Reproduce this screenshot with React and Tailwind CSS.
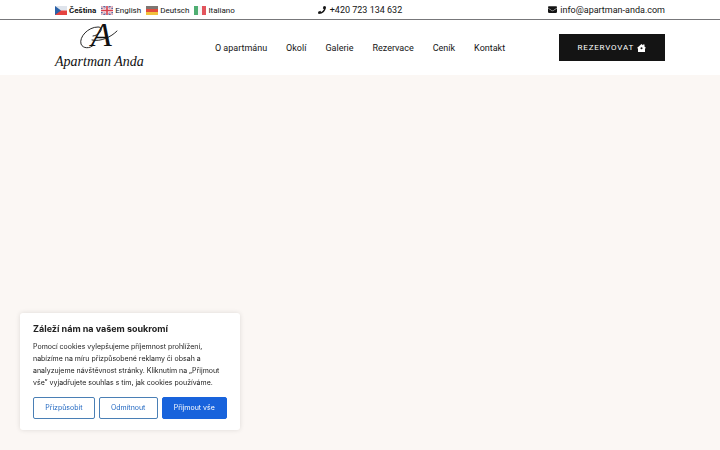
import React from 'react';
import { FaEnvelope, FaPhone } from 'react-icons/fa';

const NAV_LINKS = ['O apartmánu', 'Okolí', 'Galerie', 'Rezervace', 'Ceník', 'Kontakt'];

function FlagCz() {
  return (
    <svg viewBox="0 0 12 9" className="w-3 h-[9px]" aria-hidden="true">
      <rect width="12" height="4.5" fill="#dfe4ec" />
      <rect y="4.5" width="12" height="4.5" fill="#e5433f" />
      <path d="M0 0L6 4.5L0 9Z" fill="#2b62a8" />
    </svg>
  );
}

function FlagGb() {
  return (
    <svg viewBox="0 0 12 9" className="w-3 h-[9px]" aria-hidden="true">
      <rect width="12" height="9" fill="#5c6a9f" />
      <path d="M0 0L12 9M12 0L0 9" stroke="#f3e9ee" strokeWidth="1.8" />
      <path d="M0 0L12 9M12 0L0 9" stroke="#dc6470" strokeWidth="0.6" />
      <path d="M6 0V9M0 4.5H12" stroke="#f7eef1" strokeWidth="3" />
      <path d="M6 0V9M0 4.5H12" stroke="#d8414f" strokeWidth="1.6" />
    </svg>
  );
}

function FlagDe() {
  return (
    <svg viewBox="0 0 12 9" className="w-3 h-[9px]" aria-hidden="true">
      <rect width="12" height="3" fill="#7d7672" />
      <rect y="3" width="12" height="3" fill="#e34a3c" />
      <rect y="6" width="12" height="3" fill="#f2c13c" />
    </svg>
  );
}

function FlagIt() {
  return (
    <svg viewBox="0 0 12 9" className="w-3 h-[9px]" aria-hidden="true">
      <rect width="4" height="9" fill="#4fae72" />
      <rect x="4" width="4" height="9" fill="#f6f6f6" />
      <rect x="8" width="4" height="9" fill="#e2545c" />
    </svg>
  );
}

const LANGUAGES = [
  { name: 'Čeština', Flag: FlagCz, active: true },
  { name: 'English', Flag: FlagGb },
  { name: 'Deutsch', Flag: FlagDe },
  { name: 'Italiano', Flag: FlagIt },
];

function Logo() {
  return (
    <a href="#" className="block w-[88px]">
      <svg viewBox="0 0 88 54" className="w-full overflow-visible" role="img" aria-label="Apartman Anda">
        {/* Monogram with its flourish */}
        <text x="36" y="25" fontFamily="'Liberation Serif', serif" fontStyle="italic" fontSize="34" fill="#111">
          A
        </text>
        <path
          d="M38 24.5C35 27.5 28 28 26 23C24 16 33 6 43 6C49 6 46 14 38 15M37 19C46 21 56 16 62 10"
          fill="none"
          stroke="#111"
          strokeWidth="0.9"
          strokeLinecap="round"
        />
        <text x="0" y="45" fontFamily="'Liberation Serif', serif" fontStyle="italic" fontSize="14" fill="#111">
          Apartman Anda
        </text>
      </svg>
    </a>
  );
}

function HouseIcon() {
  return (
    <svg viewBox="0 0 18 16" className="w-[9px] h-2" fill="currentColor" aria-hidden="true">
      <path
        fillRule="evenodd"
        d="M9 0L12 2.5V1H15V5L18 8L16 9V16H2V9L0 8ZM9 6.5A2 2 0 1 0 9 10.5A2 2 0 1 0 9 6.5Z"
      />
    </svg>
  );
}

function TopBar() {
  return (
    <div className="border-b border-[#77777a] px-[55px]">
      <div className="grid grid-cols-[1fr_auto_1fr] items-center h-[19px]">
        <ul className="flex items-center gap-[5px] pt-0.5 text-[8px] leading-3 whitespace-nowrap">
          {LANGUAGES.map(({ name, Flag, active }) => (
            <li key={name}>
              <a href="#" className={active ? 'flex items-center gap-0.5 font-bold' : 'flex items-center gap-0.5'}>
                <Flag />
                {name}
              </a>
            </li>
          ))}
        </ul>
        <a href="tel:+420723134632" className="flex items-center gap-1 text-[9px] leading-3">
          <FaPhone className="w-2 h-2" />
          +420 723 134 632
        </a>
        <a href="mailto:info@apartman-anda.com" className="flex items-center justify-end gap-[3px] text-[9px] leading-3">
          <FaEnvelope className="w-[9px] h-[9px]" />
          info@apartman-anda.com
        </a>
      </div>
    </div>
  );
}

function Header() {
  return (
    <header className="bg-white">
      <TopBar />
      <div className="grid grid-cols-[1fr_auto_1fr] items-center h-[55px] px-[55px]">
        <Logo />
        <nav className="flex gap-[19px] text-[9px] leading-3 whitespace-nowrap">
          {NAV_LINKS.map((label) => (
            <a key={label} href="#">
              {label}
            </a>
          ))}
        </nav>
        <button
          type="button"
          className="justify-self-end flex items-center gap-[3px] h-[27px] px-[19px] bg-[#141414] text-white text-[8px] leading-3 tracking-widest"
        >
          REZERVOVAT
          <HouseIcon />
        </button>
      </div>
    </header>
  );
}

function CookieBanner() {
  return (
    <section
      aria-labelledby="cookie-title"
      className="fixed bottom-5 left-5 w-[220px] px-[13px] pt-3 pb-[11px] bg-white rounded-[3px] shadow-[0_0_5px_rgba(0,0,0,0.12)] font-['Inter',sans-serif]"
    >
      <h2 id="cookie-title" className="text-[9px] leading-[8px] font-bold text-[#212121]">
        Záleží nám na vašem soukromí
      </h2>
      <p className="mt-2 text-[7px] leading-3 text-[#212121]">
        Pomocí cookies vylepšujeme příjemnost prohlížení, nabízíme na míru přizpůsobené reklamy či obsah a analyzujeme
        návštěvnost stránky. Kliknutím na „Přijmout vše” vyjadřujete souhlas s tím, jak cookies používáme.
      </p>
      <div className="mt-2 flex gap-1 text-[7px] leading-3">
        <button type="button" className="flex-auto h-[22px] border border-[#4a7fb5] rounded-xs text-[#1f66c0]">
          Přizpůsobit
        </button>
        <button type="button" className="flex-auto h-[22px] border border-[#4a7fb5] rounded-xs text-[#1f66c0]">
          Odmítnout
        </button>
        <button type="button" className="flex-auto h-[22px] border border-[#1863dc] rounded-xs bg-[#1863dc] text-white">
          Přijmout vše
        </button>
      </div>
    </section>
  );
}

export default function App() {
  return (
    <div className="min-h-screen flex flex-col bg-white text-[#141414] font-['Roboto',sans-serif]">
      <Header />
      <main className="flex-1 bg-[#fbf7f4]" />
      <CookieBanner />
    </div>
  );
}
